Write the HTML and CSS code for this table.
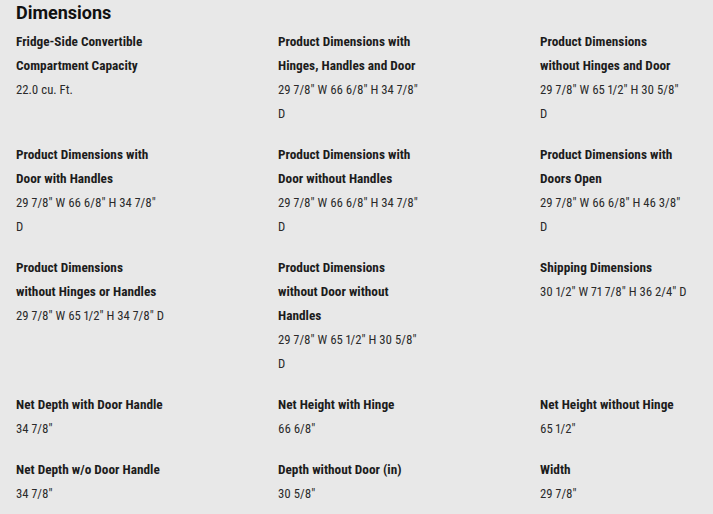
FILE: index.html
```html
<!DOCTYPE html>
<html lang="en">
<head>
<meta charset="utf-8">
<title>Dimensions</title>
<link rel="stylesheet" href="styles.css">
</head>
<body>
<section class="specs">
  <h2 class="specs-title">Dimensions</h2>
  <dl class="spec-grid">
    <div class="spec">
      <dt class="spec-name">Fridge-Side Convertible Compartment Capacity</dt>
      <dd class="spec-value">22.0 cu. Ft.</dd>
    </div>
    <div class="spec">
      <dt class="spec-name">Product Dimensions with Hinges, Handles and Door</dt>
      <dd class="spec-value">29 7/8" W 66 6/8" H 34 7/8" D</dd>
    </div>
    <div class="spec">
      <dt class="spec-name">Product Dimensions without Hinges and Door</dt>
      <dd class="spec-value">29 7/8" W 65 1/2" H 30 5/8" D</dd>
    </div>
    <div class="spec">
      <dt class="spec-name">Product Dimensions with Door with Handles</dt>
      <dd class="spec-value">29 7/8" W 66 6/8" H 34 7/8" D</dd>
    </div>
    <div class="spec">
      <dt class="spec-name">Product Dimensions with Door without Handles</dt>
      <dd class="spec-value">29 7/8" W 66 6/8" H 34 7/8" D</dd>
    </div>
    <div class="spec">
      <dt class="spec-name">Product Dimensions with Doors Open</dt>
      <dd class="spec-value">29 7/8" W 66 6/8" H 46 3/8" D</dd>
    </div>
    <div class="spec">
      <dt class="spec-name">Product Dimensions without Hinges or Handles</dt>
      <dd class="spec-value">29 7/8" W 65 1/2" H 34 7/8" D</dd>
    </div>
    <div class="spec">
      <dt class="spec-name">Product Dimensions without Door without Handles</dt>
      <dd class="spec-value">29 7/8" W 65 1/2" H 30 5/8" D</dd>
    </div>
    <div class="spec">
      <dt class="spec-name">Shipping Dimensions</dt>
      <dd class="spec-value">30 1/2" W 71 7/8" H 36 2/4" D</dd>
    </div>
    <div class="spec">
      <dt class="spec-name">Net Depth with Door Handle</dt>
      <dd class="spec-value">34 7/8"</dd>
    </div>
    <div class="spec">
      <dt class="spec-name">Net Height with Hinge</dt>
      <dd class="spec-value">66 6/8"</dd>
    </div>
    <div class="spec">
      <dt class="spec-name">Net Height without Hinge</dt>
      <dd class="spec-value">65 1/2"</dd>
    </div>
    <div class="spec">
      <dt class="spec-name">Net Depth w/o Door Handle</dt>
      <dd class="spec-value">34 7/8"</dd>
    </div>
    <div class="spec">
      <dt class="spec-name">Depth without Door (in)</dt>
      <dd class="spec-value">30 5/8"</dd>
    </div>
    <div class="spec">
      <dt class="spec-name">Width</dt>
      <dd class="spec-value">29 7/8"</dd>
    </div>
  </dl>
</section>
</body>
</html>
```
FILE: styles.css
```css
html, body {
  margin: 0;
  padding: 0;
  background: #e8e8e8;
}

body {
  font-family: Roboto, "Liberation Sans", sans-serif;
  font-stretch: 87.5%;
  font-variant-numeric: proportional-nums;
  color: #1c1c1c;
}

.specs {
  padding: 0 16px;
}

.specs-title {
  margin: 0 0 5px;
  padding-top: 1px;
  font-size: 18px;
  line-height: 24px;
  font-weight: 700;
  font-stretch: 100%;
  color: #111;
}

.spec-grid {
  display: grid;
  grid-template-columns: 262px 262px 1fr;
  row-gap: 17px;
  margin: 0;
}

.spec {
  max-width: 148.4px;
}

.spec-name {
  font-size: 13.3px;
  line-height: 24px;
  font-weight: 700;
}

.spec-value {
  margin: 0;
  font-size: 12.7px;
  line-height: 24px;
  font-weight: 400;
  color: #2a2a2a;
}
```
